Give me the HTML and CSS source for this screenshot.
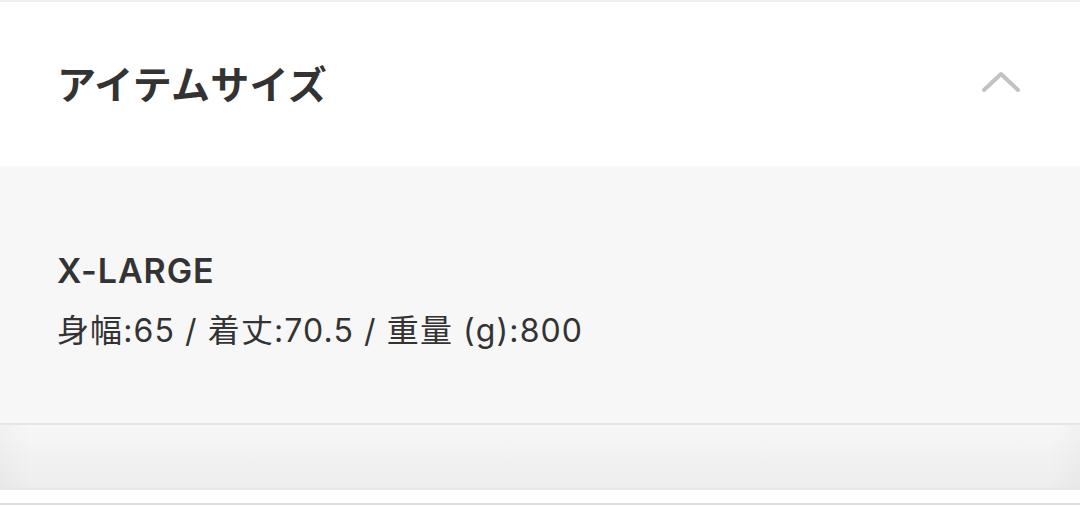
FILE: index.html
```html
<!DOCTYPE html>
<html lang="ja">
<head>
  <meta charset="UTF-8" />
  <meta name="viewport" content="width=device-width, initial-scale=1" />
  <title>アイテムサイズ</title>
  <link rel="stylesheet" href="styles.css">
</head>
<body>

<section class="accordion">
  <header class="accordion-head">
    <h2>アイテムサイズ</h2>
    <svg class="chevron" width="40" height="22" viewBox="0 0 40 22" aria-hidden="true">
      <polyline points="3,19 20,3 37,19" fill="none" stroke="#c2c2c2" stroke-width="4" stroke-linecap="round" stroke-linejoin="round" />
    </svg>
  </header>

  <div class="accordion-body">
    <div class="size-item">
      <p class="size-name">X-LARGE</p>
      <p class="size-spec">身幅:65 / 着丈:70.5 / 重量 (g):800</p>
    </div>
  </div>

  <div class="accordion-foot"></div>
</section>

<div class="page-rest"></div>

</body>
</html>
```

FILE: styles.css
```css
body {
  margin: 0;
  padding: 0;
  background: #ffffff;
  font-family: "Inter", "Noto Sans CJK JP", sans-serif;
  color: #333333;
}
.accordion {
  border-top: 2px solid #eeeeee;
}
.accordion-head {
  height: 164px;
  padding: 0 59px 0 57px;
  display: flex;
  align-items: center;
  justify-content: space-between;
  background: #ffffff;
}
.accordion-head h2 {
  margin: 0 0 4px;
  font-family: "Noto Sans CJK JP", sans-serif;
  font-size: 39px;
  font-weight: 700;
  letter-spacing: 0.3px;
  color: #333333;
}
.chevron {
  margin-bottom: 4px;
}
.accordion-body {
  background: #f7f7f7;
  height: 259px;
  padding: 0 57px;
  box-sizing: border-box;
  border-bottom: 2px solid #e6e6e6;
  display: flex;
  align-items: center;
}
.size-item {
  margin-top: 12px;
}
.size-name {
  margin: 0;
  font-size: 34px;
  font-weight: 600;
  letter-spacing: 0.9px;
  line-height: 1.3;
}
.size-spec {
  margin: 17px 0 0;
  font-size: 32px;
  letter-spacing: 1.1px;
  line-height: 1.3;
}
.accordion-foot {
  height: 63px;
  background: linear-gradient(#f7f7f7, #ededed);
  border-bottom: 2px solid #e8e8e8;
  box-shadow: inset 40px 0 30px -30px rgba(0, 0, 0, 0.03), inset -40px 0 30px -30px rgba(0, 0, 0, 0.03);
}
.page-rest {
  height: 13px;
  border-bottom: 2px solid #dddddd;
}
```
